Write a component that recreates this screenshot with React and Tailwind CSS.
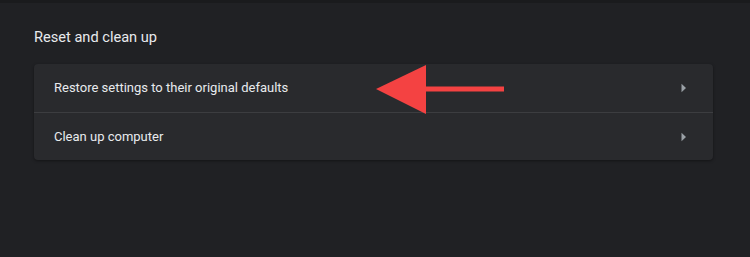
import React from "react";

const rows = ["Restore settings to their original defaults", "Clean up computer"];

const Chevron = () => (
  <svg width="6" height="10" viewBox="0 0 6 10" className="mr-[26px]">
    <path d="M0.5 0.8 L5 5 L0.5 9.2 Z" fill="#9aa0a6" />
  </svg>
);

export default function App() {
  return (
    <div
      className="relative w-[750px] h-[257px] bg-[#202124] overflow-hidden"
      style={{ fontFamily: "Roboto, 'Liberation Sans', sans-serif" }}
    >
      {/* top shade */}
      <div className="h-[3px] bg-[#1a1b1d]" />

      <div className="pl-[34px] pr-[37px]">
        <h2 className="mt-[24px] text-[14.6px] leading-[20px] text-[#e8eaed]">Reset and clean up</h2>

        {/* Card */}
        <div className="mt-[17px] bg-[#292a2d] rounded-[4px] shadow-[0_1px_3px_rgba(0,0,0,0.4)]">
          {rows.map((label, i) => (
            <div
              key={label}
              className={`flex items-center justify-between h-[48px] pl-[20px] ${
                i > 0 ? "border-t border-[#3c3d40]" : ""
              }`}
            >
              <span className="text-[13px] text-[#e8eaed]">{label}</span>
              <Chevron />
            </div>
          ))}
        </div>
      </div>

      {/* Annotation arrow */}
      <svg
        className="absolute left-0 top-0 pointer-events-none"
        width="750"
        height="257"
        viewBox="0 0 750 257"
      >
        <rect x="424" y="86.5" width="80" height="5" fill="#f44242" />
        <polygon points="376,89 426,65 426,114" fill="#f44242" />
      </svg>
    </div>
  );
}
